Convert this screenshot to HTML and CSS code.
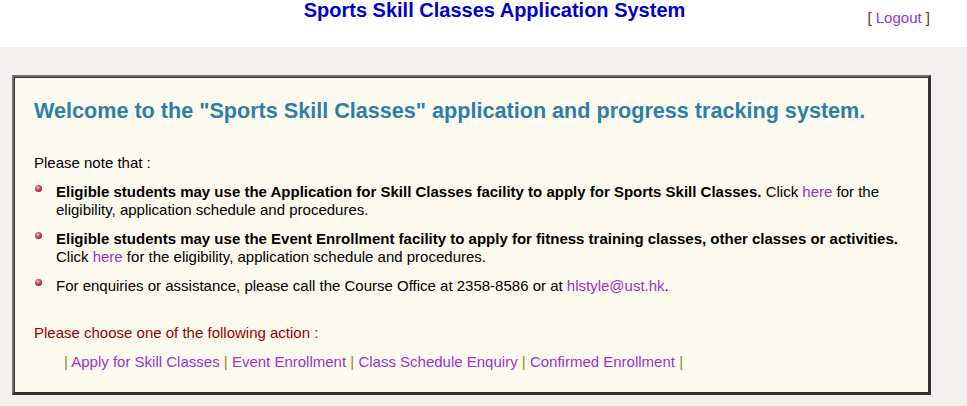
FILE: index.html
```html
<!DOCTYPE html>
<html>
<head>
<meta charset="utf-8">
<link rel="stylesheet" href="styles.css">
</head>
<body>
<div class="header">
  <div class="spacer"></div>
  <h1 class="title">Sports Skill Classes Application System</h1>
  <div class="logout"><span class="bracket">[</span> <a href="#" class="link">Logout</a> <span class="bracket">]</span></div>
</div>
<div class="main">
  <div class="panel">
    <h2 class="welcome">Welcome to the "Sports Skill Classes" application and progress tracking system.</h2>
    <p class="note">Please note that :</p>
    <ul class="items">
      <li><b>Eligible students may use the Application for Skill Classes facility to apply for Sports Skill Classes.</b> Click <a href="#" class="link">here</a> for the eligibility, application schedule and procedures.</li>
      <li><b>Eligible students may use the Event Enrollment facility to apply for fitness training classes, other classes or activities.</b> Click <a href="#" class="link">here</a> for the eligibility, application schedule and procedures.</li>
      <li>For enquiries or assistance, please call the Course Office at 2358-8586 or at <a href="#" class="link">hlstyle@ust.hk</a>.</li>
    </ul>
    <p class="choose">Please choose one of the following action :</p>
    <p class="actions"><span class="pipe">|</span> <a href="#" class="link">Apply for Skill Classes</a> <span class="pipe">|</span> <a href="#" class="link">Event Enrollment</a> <span class="pipe">|</span> <a href="#" class="link">Class Schedule Enquiry</a> <span class="pipe">|</span> <a href="#" class="link">Confirmed Enrollment</a> <span class="pipe">|</span></p>
  </div>
</div>
</body>
</html>
```
FILE: styles.css
```css
html, body {
  margin: 0;
  padding: 0;
}
body {
  background: #f5f0f0;
  font-family: "Liberation Sans", Arial, sans-serif;
  font-size: 15px;
  color: #000;
}
.header {
  background: #fff;
  height: 47px;
  display: grid;
  grid-template-columns: 1fr auto 1fr;
}
.title {
  margin: 0;
  padding-left: 22px;
  font-size: 20px;
  font-weight: bold;
  color: #0000cc;
  line-height: 20px;
}
.logout {
  justify-self: end;
  margin-right: 37px;
  padding-top: 9px;
  font-size: 15px;
  line-height: 18px;
}
.bracket {
  color: #5a3a00;
}
.link {
  color: #9933cc;
  text-decoration: none;
}
.main {
  padding: 28px 0 0 12px;
}
.panel {
  width: 914px;
  height: 315px;
  box-sizing: content-box;
  background: #fcfaee;
  border-style: solid;
  border-width: 2px 3px 3px 2px;
  border-color: #707070 #333 #333 #707070;
  box-shadow: inset 1px 1px 0 #333;
}
.welcome {
  margin: 22px 0 0 20px;
  font-size: 21.6px;
  line-height: 24px;
  color: #2e7fa8;
  font-weight: bold;
}
.note {
  margin: 31px 0 0 20px;
  line-height: 18px;
}
.items {
  list-style: none;
  margin: 11px 20px 0 20px;
  padding: 0;
}
.items li {
  position: relative;
  padding-left: 22px;
  line-height: 18px;
  margin-bottom: 11px;
}
.items li:last-child {
  margin-bottom: 0;
}
.items li::before {
  content: "";
  position: absolute;
  left: 1px;
  top: 2px;
  width: 7px;
  height: 7px;
  border-radius: 50%;
  background: radial-gradient(circle at 40% 35%, #f2c0c0 0, #c04050 45%, #7a1020 100%);
}
.choose {
  margin: 29px 0 0 20px;
  color: #990000;
  line-height: 18px;
}
.actions {
  margin: 11px 0 0 50px;
  line-height: 18px;
}
.pipe {
  color: #8a8a20;
}
```
